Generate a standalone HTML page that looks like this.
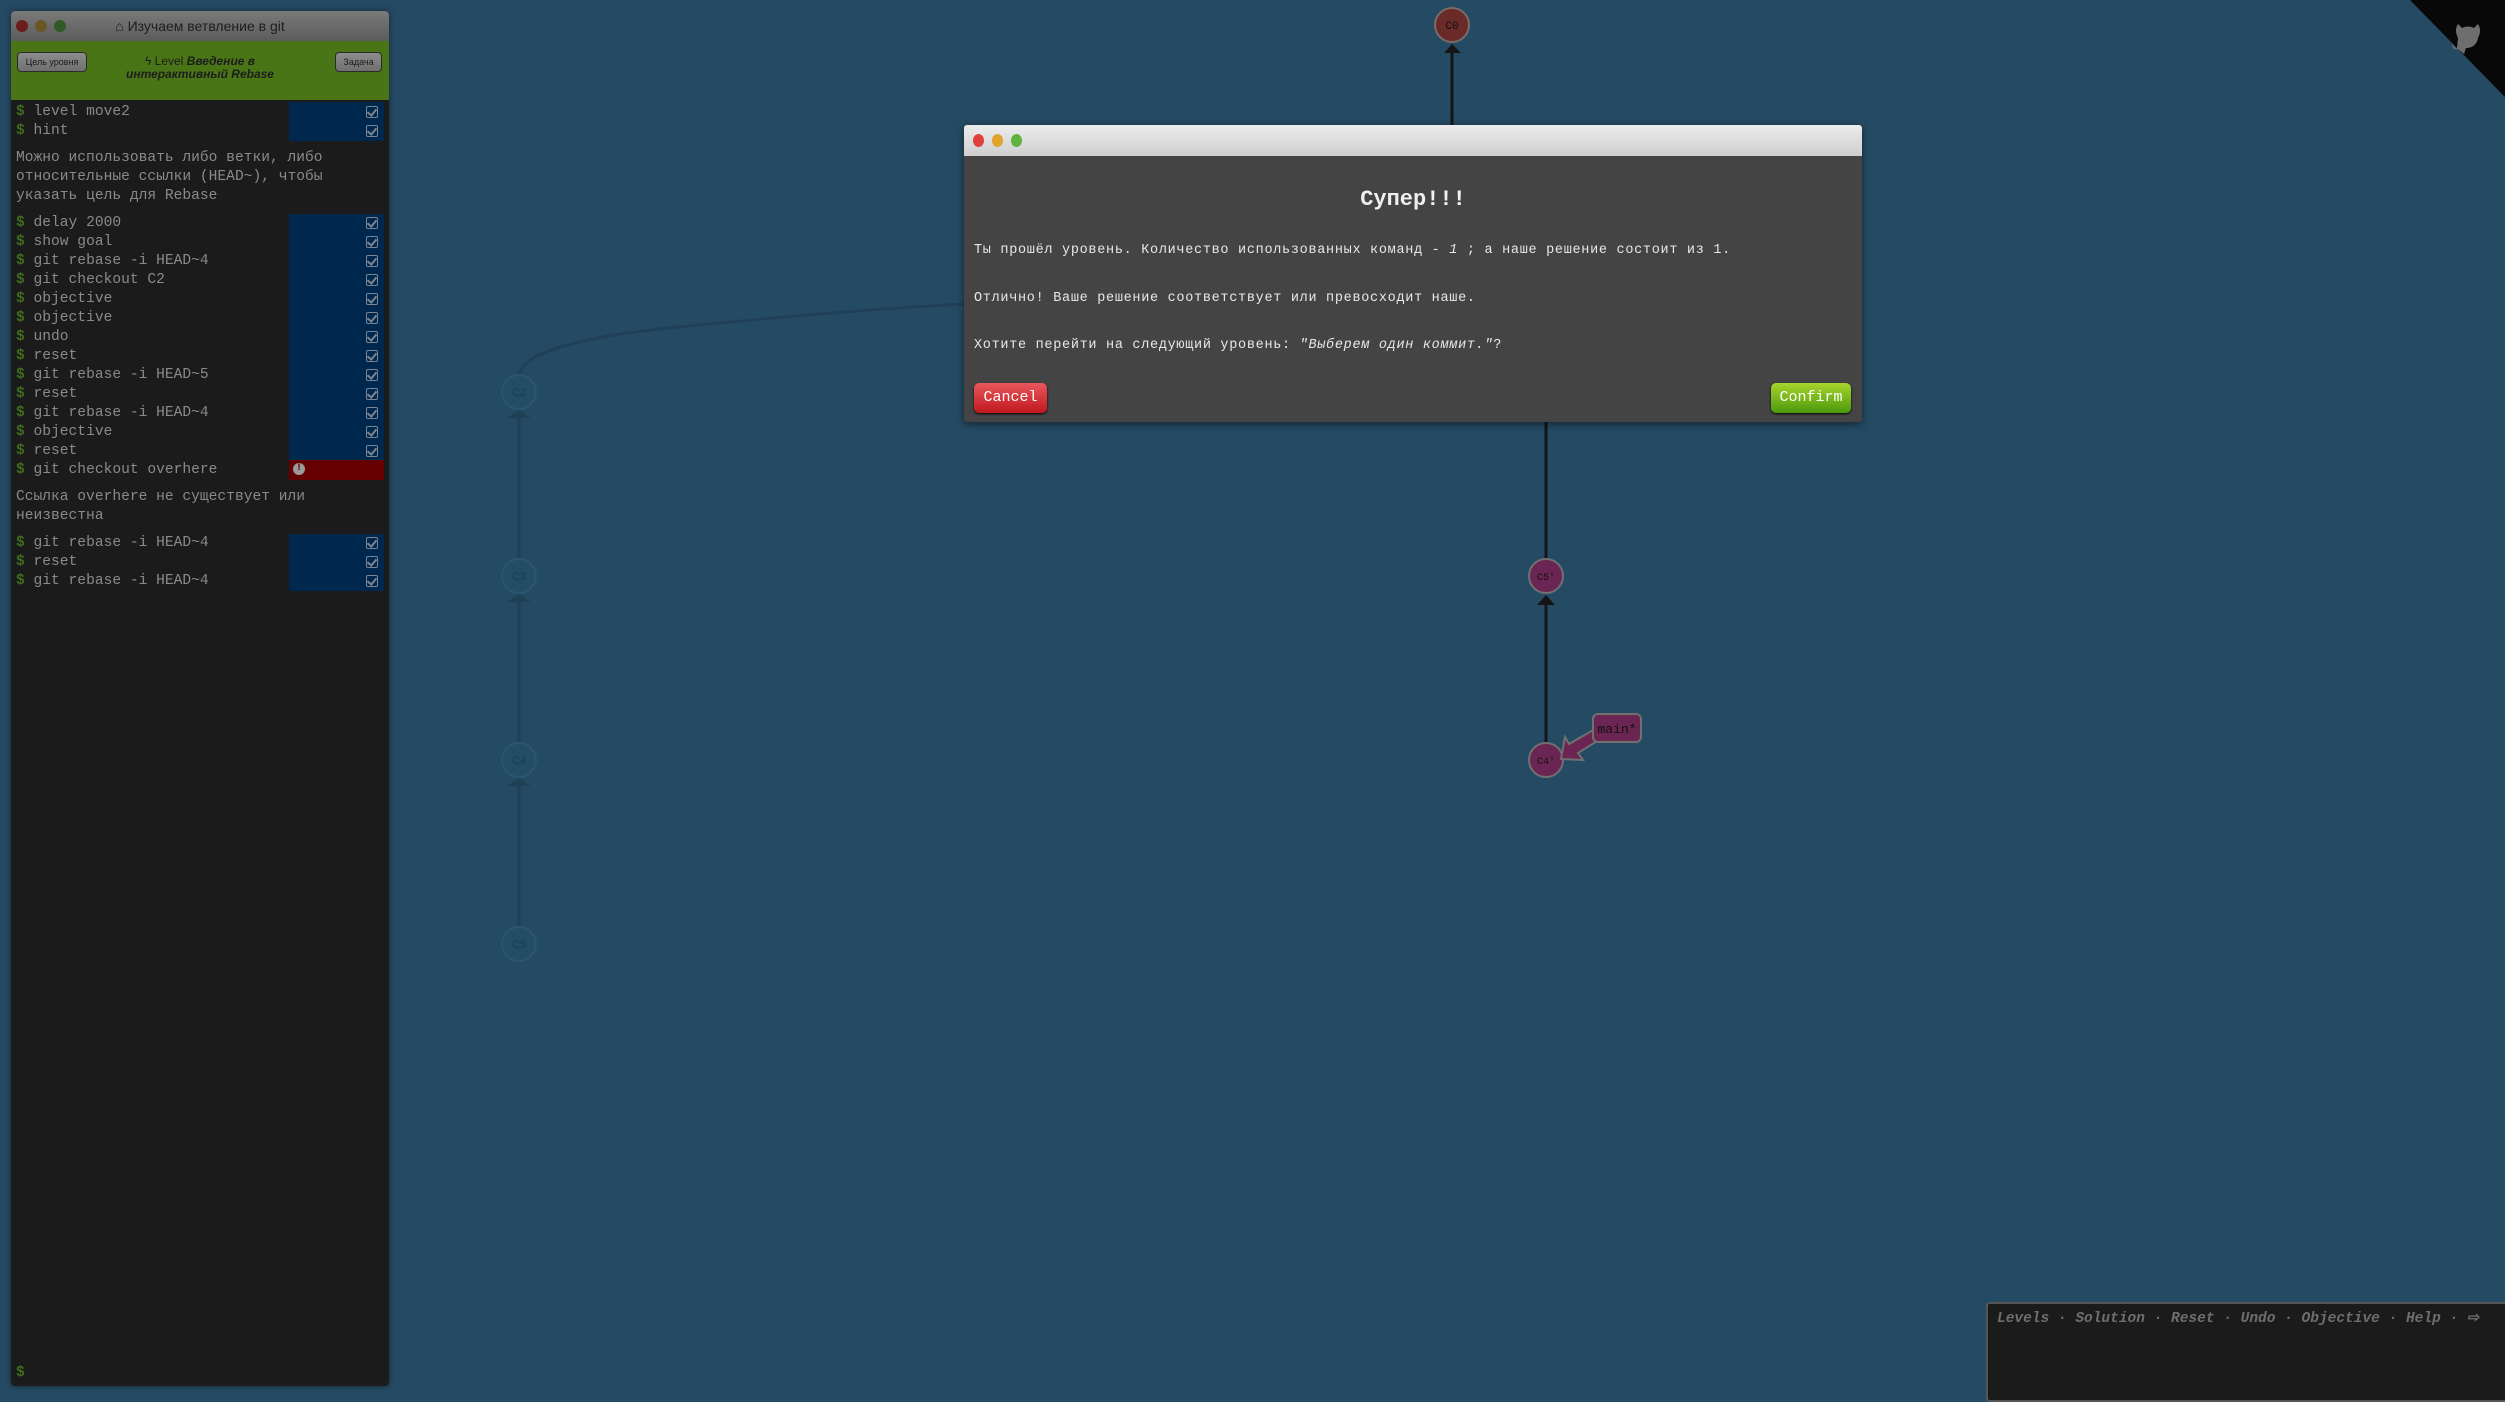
<!DOCTYPE html>
<html><head><meta charset="utf-8"><style>
*{margin:0;padding:0;box-sizing:border-box}
body{width:2505px;height:1396px;background:#254a63;position:relative;overflow:hidden;font-family:"Liberation Sans","Noto Sans CJK SC",sans-serif}
.panel{position:absolute;left:11px;top:11px;width:378px;height:1375px;background:#1b1b1b;border-radius:4px;overflow:hidden;box-shadow:0 0 6px rgba(0,0,0,.5)}
.tbar{height:30px;background:linear-gradient(#7a7a7a,#5c5c5c);position:relative;color:#1e1e1e;font-size:14px;text-align:center;line-height:30px}
.dot{position:absolute;top:9px;width:12px;height:12px;border-radius:50%}
.green{height:59px;background:#4a7516;position:relative}
.gbtn{position:absolute;top:11px;height:20px;border:1px solid #2b2b2b;border-radius:4px;background:linear-gradient(#8d8d8d,#6f6f6f);font-size:9px;color:#1a1a1a;line-height:18px;text-align:center}
.lvl{position:absolute;left:90px;right:90px;top:14px;text-align:center;font-size:12px;line-height:13px;color:#1d1d1d}
.term{position:absolute;left:0;right:0;top:2px;font-family:"Liberation Mono","Noto Sans CJK SC",monospace;font-size:14.6px;color:#8a8a8a}
.row{position:absolute;left:5px;height:19px;line-height:19px;white-space:pre}
.row b{color:#3e6d1b;font-weight:bold}
.blue{position:absolute;left:278px;width:95px;background:#00284f}
.red{position:absolute;left:278px;width:95px;background:#640000}
.chk{position:absolute;left:366px;width:12px;height:12px;border:1.5px solid #7a8594;border-radius:2px}
.chk:after{content:"";position:absolute;left:2px;top:0;width:4px;height:7px;border:solid #7a8594;border-width:0 2px 2px 0;transform:rotate(40deg)}
.dlg{position:absolute;left:964px;top:125px;width:898px;height:297px;background:#444;border-radius:3px;box-shadow:0 2px 8px rgba(0,0,0,.5)}
.dt{height:31px;background:linear-gradient(#ececec,#cfcfcf);border-radius:3px 3px 0 0;position:relative}
.dd{position:absolute;top:9px;width:11px;height:13px;border-radius:50%}
.dl{position:absolute;left:10px;font-family:"Liberation Mono",monospace;font-size:13.5px;letter-spacing:0.7px;color:#e8e8e8;white-space:pre}
.btn{position:absolute;top:258px;height:30px;border-radius:5px;font-family:"Liberation Mono",monospace;font-size:15px;color:#fff;text-align:center;line-height:30px;box-shadow:0 1px 2px #000}
.bot{position:absolute;left:1986px;top:1302px;width:530px;height:100px;background:#1b1b1b;border:2px solid #555;border-radius:4px}
.bot span{position:absolute;left:9px;top:6px;font-family:"Liberation Mono",monospace;font-style:italic;font-weight:bold;font-size:14.5px;color:#6e6e6e;white-space:pre}
</style></head><body>
<svg width="2505" height="1396" style="position:absolute;left:0;top:0">
<g stroke="#1f4057" fill="none" stroke-width="3">
<path d="M519 375 Q525 340 700 325 Q850 310 964 304"/>
<line x1="519" y1="410" x2="519" y2="559"/>
<line x1="519" y1="594" x2="519" y2="743"/>
<line x1="519" y1="778" x2="519" y2="927"/>
</g>
<g fill="#1f4057"><path d="M507 418 L519 410 L531 418Z"/><path d="M507 602 L519 594 L531 602Z"/><path d="M507 786 L519 778 L531 786Z"/></g>
<g fill="#234d66" stroke="#2b5670" stroke-width="2">
<circle cx="519" cy="392" r="17"/><circle cx="519" cy="576" r="17"/><circle cx="519" cy="760" r="17"/><circle cx="519" cy="944" r="17"/></g>
<g font-family="Liberation Sans,sans-serif" font-size="11" fill="#1c3a4f" text-anchor="middle">
<text x="519" y="396">C2</text><text x="519" y="580">C3</text><text x="519" y="764">C4</text><text x="519" y="948">C5</text></g>
<line x1="1452" y1="53" x2="1452" y2="125" stroke="#151515" stroke-width="3"/>
<path d="M1444 53 L1452 44 L1461 53Z" fill="#151515"/>
<circle cx="1452" cy="25" r="17" fill="#6a2a28" stroke="#7a6a68" stroke-width="2"/>
<text x="1452" y="29" font-family="Liberation Mono,monospace" font-size="11" text-anchor="middle" fill="#111">C0</text>
<line x1="1546" y1="422" x2="1546" y2="559" stroke="#151515" stroke-width="3"/>
<line x1="1546" y1="605" x2="1546" y2="743" stroke="#151515" stroke-width="3"/>
<path d="M1537 605 L1546 595 L1555 605Z" fill="#151515"/>
<circle cx="1546" cy="576" r="17" fill="#6a2552" stroke="#707070" stroke-width="2"/>
<circle cx="1546" cy="760" r="17" fill="#6a2552" stroke="#707070" stroke-width="2"/>
<text x="1546" y="580" font-family="Liberation Mono,monospace" font-size="10" text-anchor="middle" fill="#111">C5'</text>
<text x="1546" y="764" font-family="Liberation Mono,monospace" font-size="10" text-anchor="middle" fill="#111">C4'</text>
<path d="M1595 729 L1569 744 L1565 737 L1561 759 L1583 760 L1578 753 L1602 738Z" fill="#6a2552" stroke="#707070" stroke-width="2"/>
<rect x="1593" y="714" width="48" height="28" rx="5" fill="#6a2552" stroke="#707070" stroke-width="2"/>
<text x="1617" y="733" font-family="Liberation Mono,monospace" font-size="13" text-anchor="middle" fill="#111">main*</text>
<path d="M2410 0 L2505 0 L2505 97Z" fill="#080808"/>
<path d="M2458 38 q-4-8 0-14 l4 4 q6-3 12 0 l4-4 q4 6 0 14 q-2 10-12 10 l-2 6 -6-5 q-6 2-6 -6 q2 5 5 5Z" fill="#6e6e6e"/>
</svg>
<div class="panel">
<div class="tbar"><span class="dot" style="left:5px;background:#6a1d1d"></span><span class="dot" style="left:24px;background:#6b5526"></span><span class="dot" style="left:43px;background:#2f5a25"></span>&#8962; Изучаем ветвление в git</div>
<div class="green"><div class="gbtn" style="left:6px;width:70px">Цель уровня</div><div class="lvl">ϟ Level <i><b>Введение в интерактивный Rebase</b></i></div><div class="gbtn" style="left:324px;width:47px">Задача</div></div>
<div class="term">
<div class="blue" style="top:89px;height:39px"></div>
<div class="blue" style="top:201px;height:246px"></div>
<div class="red" style="top:447px;height:20px"><span style="position:absolute;left:4px;top:3px;width:12px;height:12px;border-radius:50%;background:#9a9a9a;color:#640000;font-size:10px;line-height:12px;text-align:center;font-weight:bold">!</span></div>
<div class="blue" style="top:521px;height:57px"></div>
<div class="row" style="top:90px"><b>$</b> level move2</div>
<div class="row" style="top:109px"><b>$</b> hint</div>
<div class="row" style="top:136px;line-height:19px">Можно использовать либо ветки, либо
относительные ссылки (HEAD~), чтобы
указать цель для Rebase</div>
<div class="row" style="top:201px"><b>$</b> delay 2000</div>
<div class="row" style="top:220px"><b>$</b> show goal</div>
<div class="row" style="top:239px"><b>$</b> git rebase -i HEAD~4</div>
<div class="row" style="top:258px"><b>$</b> git checkout C2</div>
<div class="row" style="top:277px"><b>$</b> objective</div>
<div class="row" style="top:296px"><b>$</b> objective</div>
<div class="row" style="top:315px"><b>$</b> undo</div>
<div class="row" style="top:334px"><b>$</b> reset</div>
<div class="row" style="top:353px"><b>$</b> git rebase -i HEAD~5</div>
<div class="row" style="top:372px"><b>$</b> reset</div>
<div class="row" style="top:391px"><b>$</b> git rebase -i HEAD~4</div>
<div class="row" style="top:410px"><b>$</b> objective</div>
<div class="row" style="top:429px"><b>$</b> reset</div>
<div class="row" style="top:448px"><b>$</b> git checkout overhere</div>
<div class="row" style="top:475px">Ссылка overhere не существует или
неизвестна</div>
<div class="row" style="top:521px"><b>$</b> git rebase -i HEAD~4</div>
<div class="row" style="top:540px"><b>$</b> reset</div>
<div class="row" style="top:559px"><b>$</b> git rebase -i HEAD~4</div>
<div class="row" style="top:1351px"><b>$</b></div>
</div>
</div>
<div class="dlg">
<div class="dt"><span class="dd" style="left:9px;background:#e0403a"></span><span class="dd" style="left:28px;background:#e0a42a"></span><span class="dd" style="left:47px;background:#5fb340"></span></div>
<div style="position:absolute;left:0;right:0;top:62px;text-align:center;font-family:'Liberation Mono',monospace;font-weight:bold;font-size:22px;color:#f0f0f0">Супер!!!</div>
<div class="dl" style="top:118px">Ты прошёл уровень. Количество использованных команд - <i>1</i> ; а наше решение состоит из 1.</div>
<div class="dl" style="top:166px">Отлично! Ваше решение соответствует или превосходит наше.</div>
<div class="dl" style="top:213px">Хотите перейти на следующий уровень: <i>"Выберем один коммит."</i>?</div>
<div class="btn" style="left:10px;width:73px;background:linear-gradient(#e8585c,#c0181e)">Cancel</div>
<div class="btn" style="left:807px;width:80px;background:linear-gradient(#a6d42c,#4c9a0c)">Confirm</div>
</div>
<div class="bot"><span>Levels · Solution · Reset · Undo · Objective · Help · &#x21E8;</span></div>
<div style="position:absolute;left:0;top:2px">
<div class="chk" style="top:104px"></div><div class="chk" style="top:123px"></div>
<div class="chk" style="top:215px"></div><div class="chk" style="top:234px"></div><div class="chk" style="top:253px"></div><div class="chk" style="top:272px"></div><div class="chk" style="top:291px"></div><div class="chk" style="top:310px"></div><div class="chk" style="top:329px"></div><div class="chk" style="top:348px"></div><div class="chk" style="top:367px"></div><div class="chk" style="top:386px"></div><div class="chk" style="top:405px"></div><div class="chk" style="top:424px"></div><div class="chk" style="top:443px"></div>
<div class="chk" style="top:535px"></div><div class="chk" style="top:554px"></div><div class="chk" style="top:573px"></div>
</div>
</body></html>
